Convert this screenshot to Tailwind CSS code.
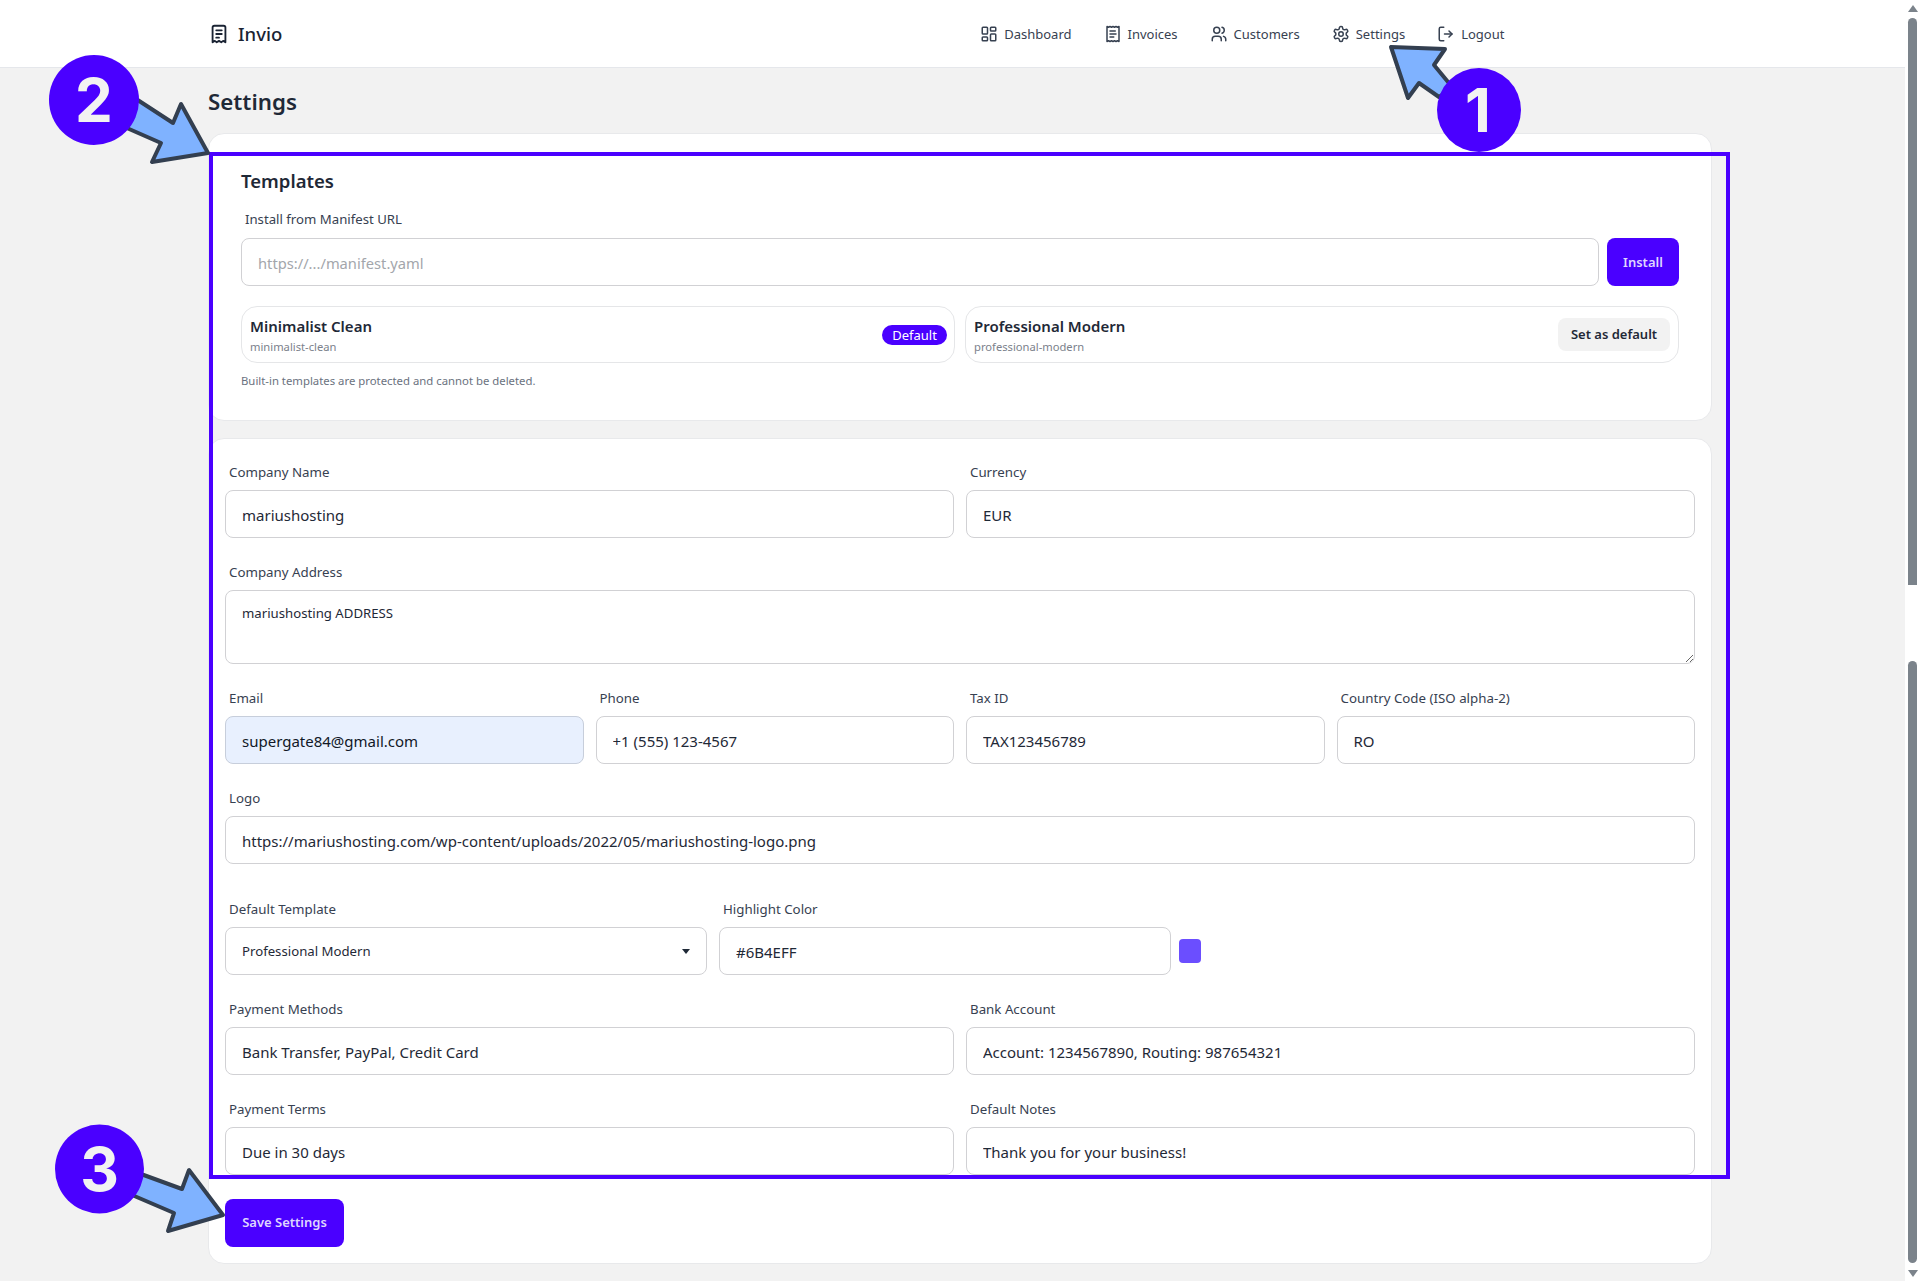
<!DOCTYPE html>
<html lang="en">
  <head>
    <meta charset="UTF-8" />
    <title>Invio - Settings</title>
    <script src="https://cdn.jsdelivr.net/npm/@tailwindcss/browser@4"></script>
  </head>
  <body class="bg-[#f2f2f2] text-[#1f2937] font-['Noto_Sans',sans-serif] antialiased">
    <div class="relative w-[1920px] h-[1281px] overflow-hidden">
      <!-- header -->
      <header class="w-[1905px] h-[68px] bg-white border-b border-[#e5e7eb] flex items-center pl-[208px]">
        <div class="flex items-center gap-[8px] text-[18.5px] font-medium text-[#1a2333]">
          <svg class="w-[22px] h-[22px]" viewBox="0 0 24 24" fill="none" stroke="currentColor" stroke-width="2" stroke-linecap="round" stroke-linejoin="round"><path d="M5 21V5a2 2 0 0 1 2-2h10a2 2 0 0 1 2 2v16l-2.5-1.5-2 1.5-2.5-1.5-2.5 1.5-2-1.5z"/><path d="M9 8h6M9 12h6M9 16h3"/></svg>
          <span>Invio</span>
        </div>
        <nav class="ml-[698px] flex items-center gap-[32px] text-[13px] leading-[20px] pt-px text-[#374151]">
          <a class="flex items-center gap-[6px]" href="#">
            <svg class="w-[18px] h-[18px]" viewBox="0 0 24 24" fill="none" stroke="currentColor" stroke-width="2" stroke-linecap="round" stroke-linejoin="round"><rect x="3" y="3" width="7" height="9" rx="1"/><rect x="14" y="3" width="7" height="5" rx="1"/><rect x="14" y="12" width="7" height="9" rx="1"/><rect x="3" y="16" width="7" height="5" rx="1"/></svg>
            Dashboard
          </a>
          <a class="flex items-center gap-[6px]" href="#">
            <svg class="w-[18px] h-[18px]" viewBox="0 0 24 24" fill="none" stroke="currentColor" stroke-width="2" stroke-linecap="round" stroke-linejoin="round"><path d="M4 2v20l2-1 2 1 2-1 2 1 2-1 2 1 2-1 2 1V2l-2 1-2-1-2 1-2-1-2 1-2-1-2 1Z"/><path d="M15 8H8M16 12H8M13 16H8"/></svg>
            Invoices
          </a>
          <a class="flex items-center gap-[6px]" href="#">
            <svg class="w-[18px] h-[18px]" viewBox="0 0 24 24" fill="none" stroke="currentColor" stroke-width="2" stroke-linecap="round" stroke-linejoin="round"><circle cx="9" cy="7" r="4"/><path d="M3 21v-2a4 4 0 0 1 4-4h4a4 4 0 0 1 4 4v2"/><path d="M16 3.13a4 4 0 0 1 0 7.75"/><path d="M21 21v-2a4 4 0 0 0-3-3.85"/></svg>
            Customers
          </a>
          <a class="flex items-center gap-[6px]" href="#">
            <svg class="w-[18px] h-[18px]" viewBox="0 0 24 24" fill="none" stroke="currentColor" stroke-width="2" stroke-linecap="round" stroke-linejoin="round"><path d="M12.22 2h-.44a2 2 0 0 0-2 2v.18a2 2 0 0 1-1 1.73l-.43.25a2 2 0 0 1-2 0l-.15-.08a2 2 0 0 0-2.73.73l-.22.38a2 2 0 0 0 .73 2.73l.15.1a2 2 0 0 1 1 1.72v.51a2 2 0 0 1-1 1.74l-.15.09a2 2 0 0 0-.73 2.73l.22.38a2 2 0 0 0 2.73.73l.15-.08a2 2 0 0 1 2 0l.43.25a2 2 0 0 1 1 1.73V20a2 2 0 0 0 2 2h.44a2 2 0 0 0 2-2v-.18a2 2 0 0 1 1-1.73l.43-.25a2 2 0 0 1 2 0l.15.08a2 2 0 0 0 2.73-.73l.22-.39a2 2 0 0 0-.73-2.73l-.15-.08a2 2 0 0 1-1-1.74v-.5a2 2 0 0 1 1-1.74l.15-.09a2 2 0 0 0 .73-2.73l-.22-.38a2 2 0 0 0-2.73-.73l-.15.08a2 2 0 0 1-2 0l-.43-.25a2 2 0 0 1-1-1.73V4a2 2 0 0 0-2-2z"/><circle cx="12" cy="12" r="3"/></svg>
            Settings
          </a>
          <a class="flex items-center gap-[6px]" href="#">
            <svg class="w-[18px] h-[18px]" viewBox="0 0 24 24" fill="none" stroke="currentColor" stroke-width="2" stroke-linecap="round" stroke-linejoin="round"><path d="M9 21H5a2 2 0 0 1-2-2V5a2 2 0 0 1 2-2h4"/><path d="m16 16 4-4-4-4"/><path d="M20 12H10"/></svg>
            Logout
          </a>
        </nav>
      </header>

      <main class="ml-[208px] w-[1504px]">
        <h1 class="mt-[18px] mb-[15px] h-[32px] leading-[32px] text-[22.3px] font-semibold text-[#1f2937]">Settings</h1>

        <!-- templates card -->
        <section class="bg-white border border-[#e8e9eb] rounded-[16px] px-[32px] pt-[32px] pb-[31px]">
          <h2 class="h-[32px] leading-[30px] text-[18.5px] font-semibold">Templates</h2>
          <label class="block h-[40px] leading-[43px] pl-[4px] text-[13.2px] text-[#374151]">Install from Manifest URL</label>
          <div class="flex gap-[8px]">
            <input class="flex-1 h-[48px] px-[16px] pt-px text-[14.7px] rounded-[8px] border border-[#d1d1d4] outline-none placeholder:text-[#a3a6ab]" placeholder="https://.../manifest.yaml" />
            <button class="w-[72px] h-[48px] pt-px rounded-[8px] bg-[#4a00ff] text-[13px] font-semibold text-[#dfd6ff]">Install</button>
          </div>
          <div class="mt-[20px] grid grid-cols-2 gap-[10px]">
            <div class="h-[57px] rounded-[16px] border border-[#e5e6e8] pl-[8px] pr-[7px] flex items-center justify-between">
              <div class="pt-[1px]">
                <div class="text-[15px] leading-[22px] font-semibold">Minimalist Clean</div>
                <div class="text-[11.2px] leading-[16px] text-[#7b818b] mt-[2px]">minimalist-clean</div>
              </div>
              <span class="w-[65px] h-[20px] rounded-full bg-[#4a00ff] text-white text-[13px] leading-[20px] text-center">Default</span>
            </div>
            <div class="h-[57px] rounded-[16px] border border-[#e5e6e8] pl-[8px] pr-[8px] flex items-center justify-between">
              <div class="pt-[1px]">
                <div class="text-[15px] leading-[22px] font-semibold">Professional Modern</div>
                <div class="text-[11.2px] leading-[16px] text-[#7b818b] mt-[2px]">professional-modern</div>
              </div>
              <button class="w-[112px] h-[33px] rounded-[8px] bg-[#f2f2f2] text-[13px] font-semibold text-[#1f2937]">Set as default</button>
            </div>
          </div>
          <p class="mt-[10px] text-[11.35px] leading-[16px] text-[#6b7280]">Built-in templates are protected and cannot be deleted.</p>
        </section>

        <!-- settings form -->
        <form class="mt-[17px] bg-white border border-[#e8e9eb] rounded-[16px] pl-[16px] pr-[16px] pt-[11px] pb-[16px]">
          <div class="grid grid-cols-2 gap-x-[12px] gap-y-[12px]">
            <div>
              <label class="block h-[40px] leading-[44px] pl-[4px] text-[13.3px] text-[#374151]">Company Name</label>
              <input class="w-full h-[48px] px-[16px] pt-[2px] text-[15px] rounded-[8px] border border-[#d1d1d4] outline-none" value="mariushosting" />
            </div>
            <div>
              <label class="block h-[40px] leading-[44px] pl-[4px] text-[13.3px] text-[#374151]">Currency</label>
              <input class="w-full h-[48px] px-[16px] pt-[2px] text-[15px] rounded-[8px] border border-[#d1d1d4] outline-none" value="EUR" />
            </div>
            <div class="col-span-2">
              <label class="block h-[40px] leading-[44px] pl-[4px] text-[13.3px] text-[#374151]">Company Address</label>
              <textarea class="block w-full h-[74px] px-[16px] py-[12px] text-[13.2px] leading-[20px] rounded-[8px] border border-[#d1d1d4] outline-none">mariushosting ADDRESS</textarea>
            </div>
          </div>
          <div class="mt-[12px] grid grid-cols-4 gap-x-[12px]">
            <div>
              <label class="block h-[40px] leading-[44px] pl-[4px] text-[13.3px] text-[#374151]">Email</label>
              <input class="w-full h-[48px] px-[16px] pt-[2px] text-[15px] rounded-[8px] border border-[#c7cedb] bg-[#e8f0fe] text-[#111827] outline-none" value="supergate84@gmail.com" />
            </div>
            <div>
              <label class="block h-[40px] leading-[44px] pl-[4px] text-[13.3px] text-[#374151]">Phone</label>
              <input class="w-full h-[48px] px-[16px] pt-[2px] text-[15px] rounded-[8px] border border-[#d1d1d4] outline-none" value="+1 (555) 123-4567" />
            </div>
            <div>
              <label class="block h-[40px] leading-[44px] pl-[4px] text-[13.3px] text-[#374151]">Tax ID</label>
              <input class="w-full h-[48px] px-[16px] pt-[2px] text-[15px] rounded-[8px] border border-[#d1d1d4] outline-none" value="TAX123456789" />
            </div>
            <div>
              <label class="block h-[40px] leading-[44px] pl-[4px] text-[13.3px] text-[#374151]">Country Code (ISO alpha-2)</label>
              <input class="w-full h-[48px] px-[16px] pt-[2px] text-[15px] rounded-[8px] border border-[#d1d1d4] outline-none" value="RO" />
            </div>
          </div>
          <div class="mt-[12px]">
            <label class="block h-[40px] leading-[44px] pl-[4px] text-[13.3px] text-[#374151]">Logo</label>
            <input class="w-full h-[48px] px-[16px] pt-[2px] text-[15px] rounded-[8px] border border-[#d1d1d4] outline-none" value="https://mariushosting.com/wp-content/uploads/2022/05/mariushosting-logo.png" />
          </div>
          <div class="mt-[23px] flex gap-x-[12px]">
            <div class="w-[482px]">
              <label class="block h-[40px] leading-[44px] pl-[4px] text-[13.3px] text-[#374151]">Default Template</label>
              <div class="relative">
                <select class="appearance-none w-full h-[48px] px-[16px] pt-px text-[13.2px] rounded-[8px] border border-[#d1d1d4] bg-white outline-none">
                  <option>Professional Modern</option>
                </select>
                <span class="absolute right-[17px] top-[22px] w-0 h-0 border-x-[4px] border-x-transparent border-t-[5px] border-t-[#1f2937]"></span>
              </div>
            </div>
            <div class="w-[452px]">
              <label class="block h-[40px] leading-[44px] pl-[4px] text-[13.3px] text-[#374151]">Highlight Color</label>
              <input class="w-full h-[48px] px-[16px] pt-[2px] text-[15px] rounded-[8px] border border-[#d1d1d4] outline-none" value="#6B4EFF" />
            </div>
            <div class="ml-[-4px] mt-[52px] w-[22px] h-[24px] rounded-[4px] bg-[#6b4eff]"></div>
          </div>
          <div class="mt-[12px] grid grid-cols-2 gap-x-[12px] gap-y-[12px]">
            <div>
              <label class="block h-[40px] leading-[44px] pl-[4px] text-[13.3px] text-[#374151]">Payment Methods</label>
              <input class="w-full h-[48px] px-[16px] pt-[2px] text-[15px] rounded-[8px] border border-[#d1d1d4] outline-none" value="Bank Transfer, PayPal, Credit Card" />
            </div>
            <div>
              <label class="block h-[40px] leading-[44px] pl-[4px] text-[13.3px] text-[#374151]">Bank Account</label>
              <input class="w-full h-[48px] px-[16px] pt-[2px] text-[15px] rounded-[8px] border border-[#d1d1d4] outline-none" value="Account: 1234567890, Routing: 987654321" />
            </div>
            <div>
              <label class="block h-[40px] leading-[44px] pl-[4px] text-[13.3px] text-[#374151]">Payment Terms</label>
              <input class="w-full h-[48px] px-[16px] pt-[2px] text-[15px] rounded-[8px] border border-[#d1d1d4] outline-none" value="Due in 30 days" />
            </div>
            <div>
              <label class="block h-[40px] leading-[44px] pl-[4px] text-[13.3px] text-[#374151]">Default Notes</label>
              <input class="w-full h-[48px] px-[16px] pt-[2px] text-[15px] rounded-[8px] border border-[#d1d1d4] outline-none" value="Thank you for your business!" />
            </div>
          </div>
          <button type="button" class="mt-[24px] block w-[119px] h-[48px] rounded-[8px] bg-[#4a00ff] text-[13px] font-semibold text-[#dfd6ff]">Save Settings</button>
        </form>
      </main>

      <!-- scrollbar -->
      <div class="absolute top-0 right-0 w-[15px] h-[1281px] bg-white">
        <span class="absolute left-[3px] top-[5px] w-0 h-0 border-x-[5px] border-x-transparent border-b-[7px] border-b-[#7b838b]"></span>
        <div class="absolute left-[3px] top-[18px] w-[9px] h-[567px] rounded-t-full bg-[#7b838b]"></div>
        <div class="absolute left-[3px] top-[661px] w-[9px] h-[602px] rounded-full bg-[#7b838b]"></div>
        <span class="absolute left-[3px] top-[1270px] w-0 h-0 border-x-[5px] border-x-transparent border-t-[7px] border-t-[#7b838b]"></span>
      </div>

      <!-- annotations drawn on top of the screenshot -->
      <svg class="absolute inset-0 pointer-events-none" width="1920" height="1281" viewBox="0 0 1920 1281">
        <rect x="211" y="154" width="1517" height="1023" fill="none" stroke="#4a00ff" stroke-width="4"/>
        <g fill="#7fb2ff" stroke="#333f50" stroke-width="4" stroke-linejoin="round">
          <path d="M1391 47 L1445 49 L1434 65 L1453 88 L1439 97 L1419 83 L1408 98 Z"/>
          <path d="M208 153 L181 104 L173 123 L130 95 L120 125 L161 143 L152 162 Z"/>
          <path d="M223 1215 L189 1170 L182 1189 L130 1170 L125 1192 L174 1213 L168 1231 Z"/>
        </g>
        <g fill="#4a00ff">
          <circle cx="1479" cy="110" r="42"/>
          <circle cx="94" cy="100" r="45"/>
          <circle cx="99.5" cy="1169" r="44.5"/>
        </g>
        <g fill="#f2f2f2" font-family="Inter" font-weight="700" font-size="60" text-anchor="middle">
          <text x="1478" y="132">1</text>
          <text x="94" y="122">2</text>
          <text x="99.5" y="1191">3</text>
        </g>
      </svg>
    </div>
  </body>
</html>
